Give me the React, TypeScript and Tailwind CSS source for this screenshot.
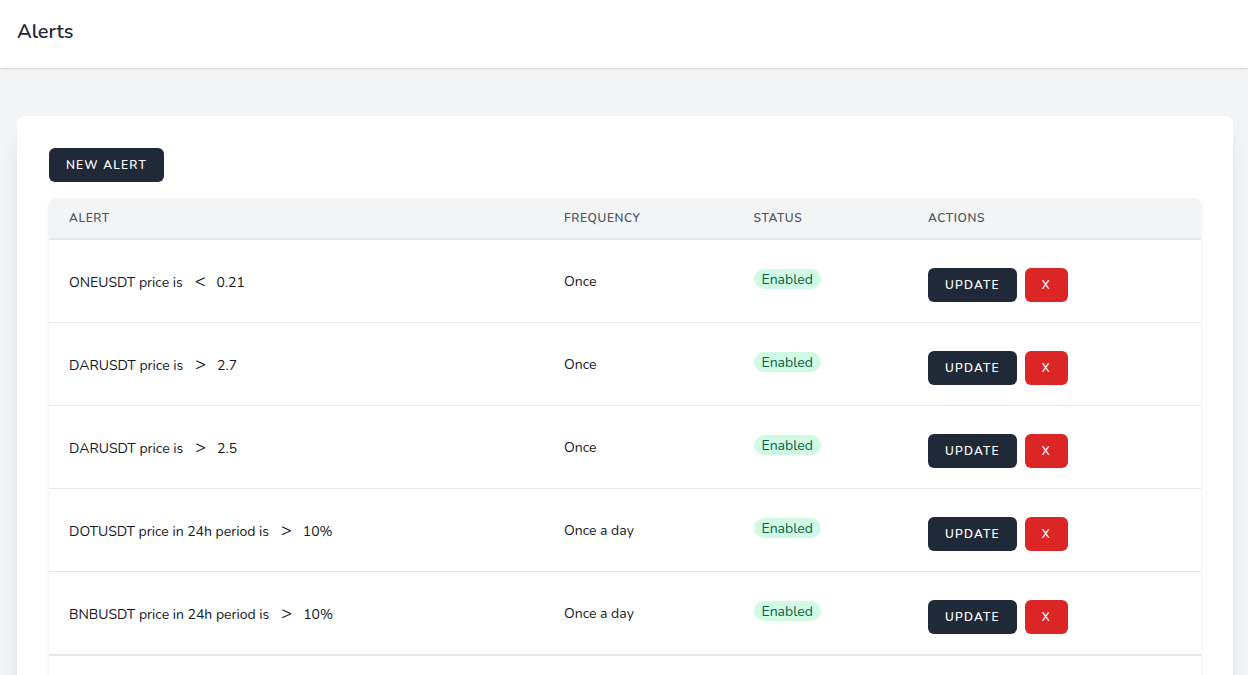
const rows = [
  { symbol: "ONEUSDT", period: "price is", op: "<", value: "0.21", frequency: "Once" },
  { symbol: "DARUSDT", period: "price is", op: ">", value: "2.7", frequency: "Once" },
  { symbol: "DARUSDT", period: "price is", op: ">", value: "2.5", frequency: "Once" },
  { symbol: "DOTUSDT", period: "price in 24h period is", op: ">", value: "10%", frequency: "Once a day" },
  { symbol: "BNBUSDT", period: "price in 24h period is", op: ">", value: "10%", frequency: "Once a day" },
];

const btn =
  "inline-flex items-center h-[34px] rounded-md text-xs font-semibold uppercase tracking-widest text-white";

export default function App() {
  return (
    <div className="h-[675px] overflow-hidden bg-[#f3f4f6] font-['Nunito','Noto_Sans',sans-serif] text-[#111827]">
      <header className="relative bg-white shadow">
        <div className="h-[68px] pt-[19px] px-[17px]">
          <h2 className="text-xl font-semibold text-[#1f2937] leading-[26px]">Alerts</h2>
        </div>
      </header>
      <main className="pt-12 pl-[17px] pr-[15px]">
        <div className="bg-white rounded-lg shadow-xl p-8">
          <button className={`${btn} bg-[#1f2937] px-[17px]`}>New Alert</button>
          <div className="mt-4 rounded-lg shadow">
            <table className="w-full table-fixed text-sm">
              <thead>
                <tr className="h-[41px] bg-[#f3f4f6] border-b-2 border-[#e5e7eb] text-xs text-[#4b5563] uppercase tracking-wider text-left">
                  <th className="w-[515px] pl-5 font-semibold rounded-tl-lg">Alert</th>
                  <th className="w-[189.5px] font-semibold">Frequency</th>
                  <th className="w-[174.5px] font-semibold">Status</th>
                  <th className="font-semibold rounded-tr-lg">Actions</th>
                </tr>
              </thead>
              <tbody>
                {rows.map((r, i) => (
                  <tr key={i} className={`${i === 4 ? "h-[84px] border-b-2" : "h-[83px] border-b"} border-[#e5e7eb]`}>
                    <td className="pl-5 pt-[2px]">
                      {r.symbol} {r.period}
                      <span className="ml-3 mr-[11px] text-lg leading-5">{r.op}</span>
                      {r.value}
                    </td>
                    <td className="pt-[2px]">{r.frequency}</td>
                    <td className="pt-[2px]">
                      <span className="inline-block h-5 px-2 rounded-full bg-[#d1fae5] text-[#065f46] leading-[22px] -mt-[6px] align-middle">
                        Enabled
                      </span>
                    </td>
                    <td className="pt-[2px]">
                      <div className="flex gap-2 pt-[7px]">
                        <button className={`${btn} bg-[#1f2937] px-[17px]`}>Update</button>
                        <button className={`${btn} bg-[#dc2626] px-[17px]`}>X</button>
                      </div>
                    </td>
                  </tr>
                ))}
                <tr className="h-[83px]">
                  <td colSpan={4}></td>
                </tr>
              </tbody>
            </table>
          </div>
        </div>
      </main>
    </div>
  );
}
